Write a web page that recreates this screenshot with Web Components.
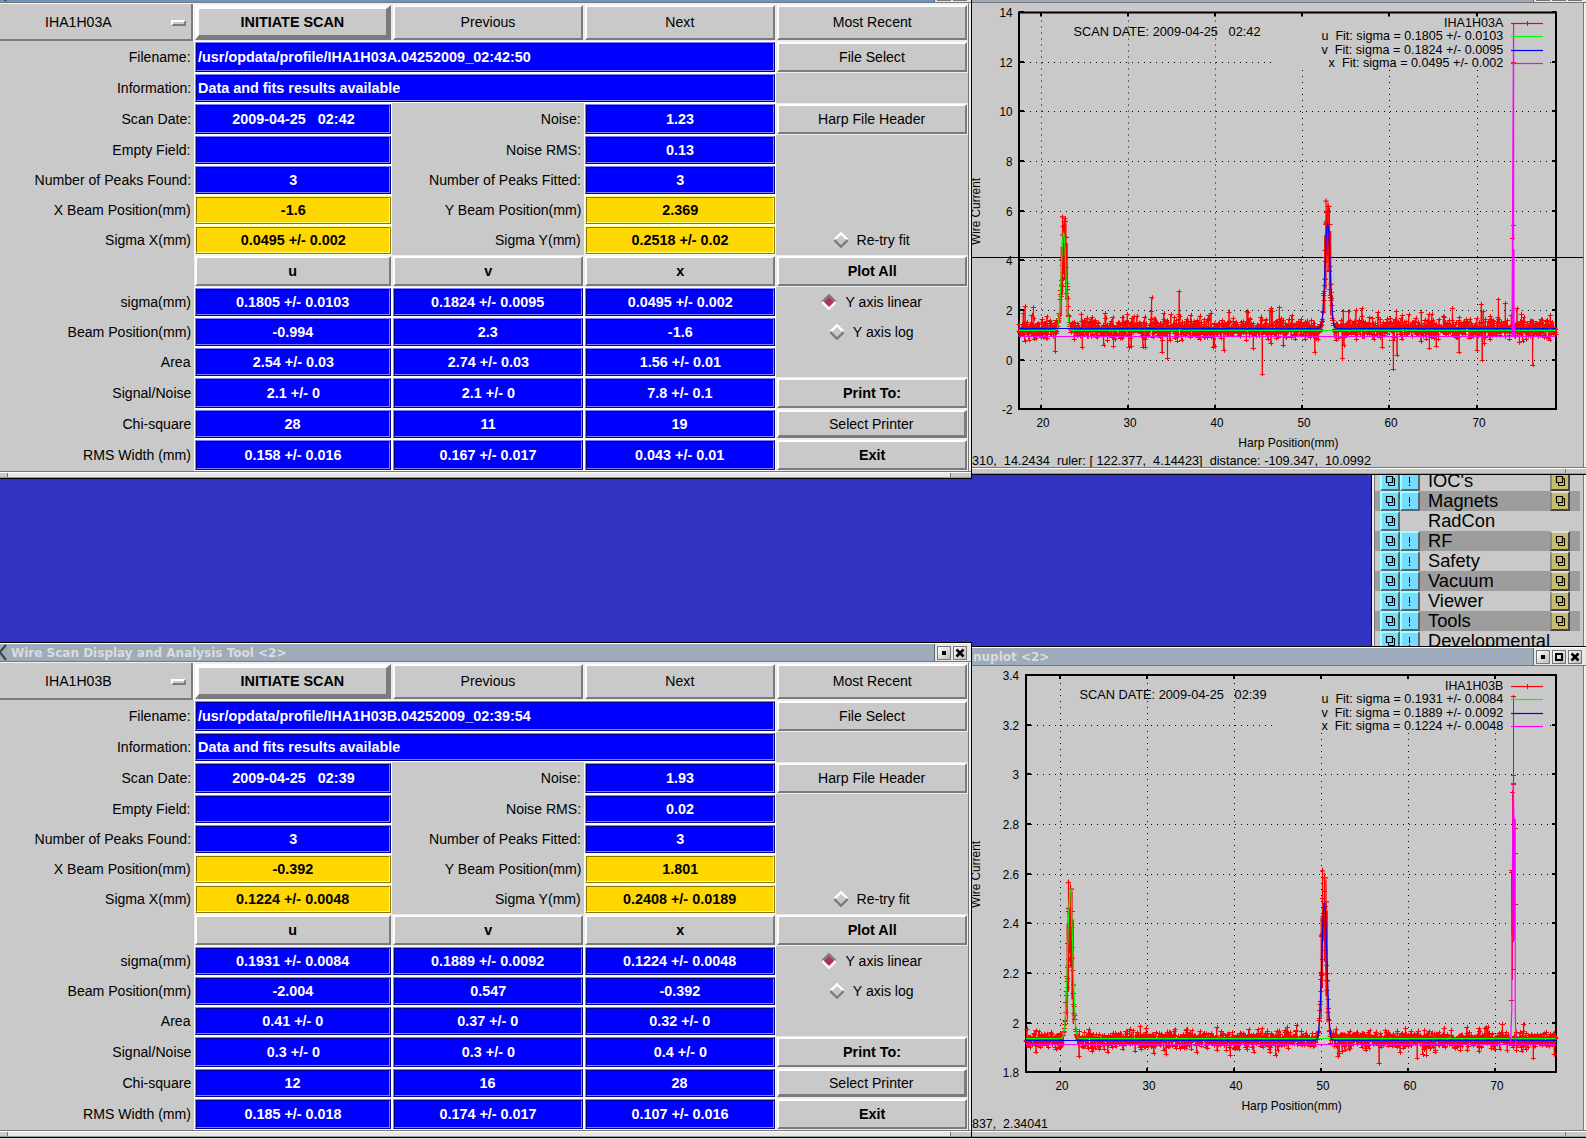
<!DOCTYPE html>
<html lang="en">
<head>
<meta charset="utf-8">
<title>Wire Scan Display and Analysis Tool</title>
<style>
  html, body { margin: 0; height: 100%; overflow: hidden; }
  body {
    position: relative;
    width: 1586px;
    height: 1139px;
    background: #3333c3;
    font-family: 'Liberation Sans', Arial, sans-serif;
    color: #000;
  }
  .floor { position: absolute; left: 0; right: 0; top: 1138px; height: 1px; background: #dcdcdc; }
  nav-menu { position: absolute; left: 1371px; top: 471px; }
  wm-window { position: absolute; }
  #plotA { left: 971px; top: -17px; }
  #plotB { left: 971px; top: 646px; }
  #scanA { left: 0; top: -17px; }
  #scanB { left: 0; top: 642px; }
</style>
</head>
<body>
<div class="floor"></div>
<nav-menu></nav-menu>
<wm-window id="plotA" kind="plot" label="nuplot"><harp-plot data-set="A"></harp-plot></wm-window>
<wm-window id="plotB" kind="plot" label="nuplot &lt;2&gt;"><harp-plot data-set="B"></harp-plot></wm-window>
<wm-window id="scanA" kind="scan" focused label="Wire Scan Display and Analysis Tool"><scan-panel data-set="A"></scan-panel></wm-window>
<wm-window id="scanB" kind="scan" label="Wire Scan Display and Analysis Tool &lt;2&gt;"><scan-panel data-set="B"></scan-panel></wm-window>

<script>
/* --------------------------------------------------------------------------
   <wm-window> title bar, frame and resize strip
   -------------------------------------------------------------------------- */
const windowTemplate = document.createElement('template');
windowTemplate.innerHTML = `
<style>
  :host {
    display: flex;
    flex-direction: column;
    box-sizing: border-box;
    width: 972px;
    background: #c9c9c9;
    border-top: 1px solid #000;
    border-right: 1px solid #000;
    border-bottom: 1px solid #000;
  }
  :host([kind="plot"]) { width: 616px; border-left: 1px solid #000; }

  .bar {
    display: flex;
    height: 17px;
    border-top: 1px solid #fff;
    border-bottom: 1px solid #777;
    background: #9dabbb;
  }
  :host([focused]) .bar { background: #6a96c4; }

  .mark { width: 11px; height: 17px; flex: none; }
  :host([kind="plot"]) .mark { width: 1px; }
  .mark svg { display: block; }
  :host([kind="plot"]) .mark svg { display: none; }

  .title {
    flex: 1;
    font: bold 12px/17px 'DejaVu Sans', sans-serif;
    color: #dcdcdc;
    white-space: pre;
    overflow: hidden;
    padding-top: 1px;
    height: 16px;
  }

  .buttons {
    display: flex;
    gap: 2px;
    padding: 2px 4px 0 2px;
    height: 15px;
    background: #e8e8e8;
    border-left: 1px solid #666;
  }
  .buttons i {
    box-sizing: border-box;
    width: 14px;
    height: 14px;
    border: 1px solid #777;
    background: linear-gradient(135deg, #fff, #bbb);
  }
  .buttons svg { display: block; width: 12px; height: 12px; }

  .body { display: flex; border-right: 1px solid #777; margin-right: 2px; box-shadow: 2px 0 0 #f0f0f0; }
  :host([kind="scan"]) .body { border-top: 1px solid #f4f4f4; }

  .strip {
    display: flex;
    height: 5px;
    border-top: 1px solid #777;
    box-shadow: inset 0 1px 0 #fff;
    background: #e8e8e8;
    border-bottom: 1px solid #999;
  }
  :host([kind="plot"]) .strip { background: #c9c9c9; }
  .strip b { box-sizing: border-box; width: 8px; background: #c9c9c9; border-right: 1px solid #777; margin-top: 1px; }
  .strip u { flex: 1; }
  .strip s { box-sizing: border-box; width: 21px; background: #c9c9c9; border-left: 1px solid #777; margin-top: 1px; }
  :host([kind="plot"]) .strip b { display: none; }
</style>
<div class="bar">
  <div class="mark"><svg width="11" height="17"><path d="M-1 9L6 1M-1 7L6 16" stroke="#444" stroke-width="2.2" fill="none"/></svg></div>
  <div class="title"><span></span></div>
  <div class="buttons">
    <i><svg viewBox="0 0 12 12"><rect x="4" y="4" width="4" height="4"/></svg></i>
    <i class="max"><svg viewBox="0 0 12 12"><rect x="3" y="3" width="6" height="6" fill="none" stroke="#000" stroke-width="2"/></svg></i>
    <i><svg viewBox="0 0 12 12"><path d="M2.5 2.5L9.5 9.5M9.5 2.5L2.5 9.5" stroke="#000" stroke-width="2.6"/></svg></i>
  </div>
</div>
<div class="body"><slot></slot></div>
<div class="strip"><b></b><u></u><s></s></div>
`;

class WmWindow extends HTMLElement {
  constructor() {
    super();
    this.attachShadow({ mode: 'open' });
    this.shadowRoot.appendChild(windowTemplate.content.cloneNode(true));
  }

  connectedCallback() {
    // windows pushed above the top of the screen keep only the edge of their bar
    this.shadowRoot.querySelector('.title span').textContent =
      this.offsetTop < 0 ? '' : this.getAttribute('label');
    if (this.getAttribute('kind') === 'scan') {
      this.shadowRoot.querySelector('.max').remove();
    }
  }
}
customElements.define('wm-window', WmWindow);

/* --------------------------------------------------------------------------
   <scan-cell> one cell of the scan panel: label, field, push or option
   -------------------------------------------------------------------------- */
const cellTemplate = document.createElement('template');
cellTemplate.innerHTML = `
<style>
  :host {
    display: flex;
    align-items: center;
    justify-content: center;
    box-sizing: border-box;
    min-width: 0;
    font-size: 15.4px;
    line-height: 18px;
    white-space: pre;
  }
  span { display: inline-block; transform: scaleX(.915); }

  :host([type="label"]) { justify-content: flex-end; padding-right: 3px; }
  :host([type="label"]) span { transform-origin: 100% 50%; transform: scaleX(.915); }

  :host([type="field"]) { border: 1px solid #fff; color: #fff; font-weight: bold; }
  :host([type="field"]) .box { border-color: #8080ff #000090 #000090 #8080ff; background: #00f; }
  :host([type="field"]) .in { border-color: #000090 #8080ff #8080ff #000090; }
  :host([tone="gold"]) { color: #000; border-color: #fffff0; }
  :host([tone="gold"]) .box { border-color: #ffff7c #8c7600 #8c7600 #ffff7c; background: #ffd700; }
  :host([tone="gold"]) .in { border-color: #8c7600 #ffff7c #ffff7c #8c7600; }
  :host([type="field"]) span, :host([bold]) span { transform: scaleX(.935); }
  :host([bold]) { font-weight: bold; }
  :host([left]) .in { justify-content: flex-start; padding-left: 1px; }
  :host([left]) span { transform-origin: 0 50%; }

  .box, .in {
    display: flex;
    flex: 1;
    align-self: stretch;
    align-items: center;
    justify-content: center;
    border: 0 solid;
  }
  :host([type="field"]) .box, :host([type="field"]) .in { border-width: 1px; }

  :host([type="push"]) { border: 1px solid #ececec; }
  :host([type="push"]) .box { border: 2px solid; border-color: #fff #7b7b7b #7b7b7b #fff; }
  :host([type="push"][depth="3"]) .box { border-width: 2px 3px 3px 2px; }
  :host([type="push"][depth="5"]) .box { border-width: 4px 5px 5px 4px; }
  :host([head]) .in { padding-bottom: 2px; }
  :host([head][depth]) .in { padding-bottom: 1px; }

  :host([type="option"]) { border-right: 1px solid #fff; }
  :host([type="option"]) .box { border: solid #7b7b7b; border-width: 0 2px 2px 0; }
  :host([type="option"]) .in { justify-content: flex-end; padding-bottom: 0; }
  .knob {
    box-sizing: border-box;
    width: 15px;
    height: 6px;
    margin: 2px 5px 0 56px;
    border: 2px solid;
    border-color: #fff #7b7b7b #7b7b7b #fff;
    background: #c9c9c9;
  }
  .knob, .gem { display: none; }
  :host([type="option"]) .knob { display: block; }
  :host([type="radio"]) .in { padding-left: 2px; }
  :host([type="radio"]) .gem { display: block; margin-right: 5px; }
</style>
<div class="box"><div class="in">
  <svg class="gem" width="16" height="16" viewBox="0 0 16 16">
    <path class="hi" d="M1.5 8L8 1.5L14.5 8" fill="none" stroke="#fff" stroke-width="2.6"/>
    <path class="lo" d="M1.5 8L8 14.5L14.5 8" fill="none" stroke="#7b7b7b" stroke-width="2.6"/>
    <path class="dot" d="M8 3L13 8L8 13L3 8Z" fill="#c9c9c9"/>
  </svg><span><slot></slot></span><div class="knob"></div>
</div></div>
`;

class ScanCell extends HTMLElement {
  constructor() {
    super();
    this.attachShadow({ mode: 'open' });
    this.shadowRoot.appendChild(cellTemplate.content.cloneNode(true));
  }

  connectedCallback() {
    const root = this.shadowRoot;
    if (this.getAttribute('type') === 'label') {
      root.querySelector('.in').style.justifyContent = 'flex-end';
    }
    if (this.hasAttribute('checked')) {
      root.querySelector('.hi').setAttribute('stroke', '#7b7b7b');
      root.querySelector('.lo').setAttribute('stroke', '#fff');
      root.querySelector('.dot').setAttribute('fill', '#b03060');
    }
  }
}
customElements.define('scan-cell', ScanCell);

/* --------------------------------------------------------------------------
   <scan-panel>
   -------------------------------------------------------------------------- */
const SCANS = {
  A: {
    name: 'IHA1H03A',
    file: '/usr/opdata/profile/IHA1H03A.04252009_02:42:50',
    date: '2009-04-25   02:42', noise: '1.23', rms: '0.13',
    xpos: '-1.6', ypos: '2.369', sx: '0.0495 +/- 0.002', sy: '0.2518 +/- 0.02',
    rows: [
      ['0.1805 +/- 0.0103', '0.1824 +/- 0.0095', '0.0495 +/- 0.002'],
      ['-0.994', '2.3', '-1.6'],
      ['2.54 +/- 0.03', '2.74 +/- 0.03', '1.56 +/- 0.01'],
      ['2.1 +/- 0', '2.1 +/- 0', '7.8 +/- 0.1'],
      ['28', '11', '19'],
      ['0.158 +/- 0.016', '0.167 +/- 0.017', '0.043 +/- 0.01'],
    ],
  },
  B: {
    name: 'IHA1H03B',
    file: '/usr/opdata/profile/IHA1H03B.04252009_02:39:54',
    date: '2009-04-25   02:39', noise: '1.93', rms: '0.02',
    xpos: '-0.392', ypos: '1.801', sx: '0.1224 +/- 0.0048', sy: '0.2408 +/- 0.0189',
    rows: [
      ['0.1931 +/- 0.0084', '0.1889 +/- 0.0092', '0.1224 +/- 0.0048'],
      ['-2.004', '0.547', '-0.392'],
      ['0.41 +/- 0', '0.37 +/- 0', '0.32 +/- 0'],
      ['0.3 +/- 0', '0.3 +/- 0', '0.4 +/- 0'],
      ['12', '16', '28'],
      ['0.185 +/- 0.018', '0.174 +/- 0.017', '0.107 +/- 0.016'],
    ],
  },
};

class ScanPanel extends HTMLElement {
  constructor() {
    super();
    this.attachShadow({ mode: 'open' });
  }

  connectedCallback() {
    const d = SCANS[this.dataset.set];
    const label = (t) => `<scan-cell type="label">${t}</scan-cell>`;
    const field = (t, more = '') => `<scan-cell type="field" ${more}>${t}</scan-cell>`;
    const gold = (t) => field(t, 'tone="gold"');
    const push = (t, more = '') => `<scan-cell type="push" ${more}>${t}</scan-cell>`;
    const radio = (t, more = '') => `<scan-cell type="radio" ${more}>${t}</scan-cell>`;
    const names = ['sigma(mm)', 'Beam Position(mm)', 'Area', 'Signal/Noise', 'Chi-square', 'RMS Width (mm)'];
    const side = [
      radio('Y axis linear', 'checked'), radio('Y axis log'), '<i></i>',
      push('Print To:', 'bold'), push('Select Printer', 'depth="3"'), push('Exit', 'bold'),
    ];

    this.shadowRoot.innerHTML = `
<style>
  :host {
    display: grid;
    grid-template-columns: 194px 198px 192px 192px 192px;
    grid-template-rows: 37px 32px 30px 32px 30px 30px 30px 30px 32px 30px 30px 30px 32px 30px 32px;
    background: #c9c9c9;
  }
  .wide { grid-column: span 3; }
</style>
<scan-cell type="option">${d.name}</scan-cell>
${push('INITIATE SCAN', 'head bold depth="5"')}${push('Previous', 'head')}${push('Next', 'head')}${push('Most Recent', 'head')}
${label('Filename:')}${field(d.file, 'left class="wide"')}${push('File Select')}
${label('Information:')}${field('Data and fits results available', 'left class="wide"')}<i></i>
${label('Scan Date:')}${field(d.date)}${label('Noise:')}${field(d.noise)}${push('Harp File Header')}
${label('Empty Field:')}${field('')}${label('Noise RMS:')}${field(d.rms)}<i></i>
${label('Number of Peaks Found:')}${field('3')}${label('Number of Peaks Fitted:')}${field('3')}<i></i>
${label('X Beam Position(mm)')}${gold(d.xpos)}${label('Y Beam Position(mm)')}${gold(d.ypos)}<i></i>
${label('Sigma X(mm)')}${gold(d.sx)}${label('Sigma Y(mm)')}${gold(d.sy)}${radio('Re-try fit')}
<i></i>${push('u', 'bold')}${push('v', 'bold')}${push('x', 'bold')}${push('Plot All', 'bold')}
${d.rows.map((r, i) => label(names[i]) + r.map((v) => field(v)).join('') + side[i]).join('')}`;
  }
}
customElements.define('scan-panel', ScanPanel);

/* --------------------------------------------------------------------------
   <nav-menu> list of control screens
   -------------------------------------------------------------------------- */
class NavMenu extends HTMLElement {
  constructor() {
    super();
    this.attachShadow({ mode: 'open' });
    const pages = '<svg viewBox="0 0 16 16"><path d="M10.5 5.5H12.5V12.5H6.5V10" fill="none" stroke="#000"/><path d="M4.5 3.5H10.5V9.5H4.5Z" fill="none" stroke="#000" stroke-width="1.2"/></svg>';
    const bang = '<svg viewBox="0 0 16 16"><path d="M7.5 4V10M7.5 11.5V13" stroke="#000"/></svg>';
    const items = [
      ["IOC's", 1, 1], ['Magnets', 1, 1], ['RadCon', 0, 0], ['RF', 1, 1], ['Safety', 1, 1],
      ['Vacuum', 1, 1], ['Viewer', 1, 1], ['Tools', 1, 1], ['Developmental', 1, 0],
    ];
    this.shadowRoot.innerHTML = `
<style>
  :host {
    display: flex;
    flex-direction: column;
    box-sizing: border-box;
    width: 215px;
    border-left: 1px solid #000;
    background: #c9c9c9;
    box-shadow: inset 2px 0 0 #f0f0f0, inset 3px 0 0 #777, inset -2px 0 0 #f0f0f0, inset -3px 0 0 #777;
    padding: 0 6px 0 3px;
  }
  .row {
    display: grid;
    grid-template-columns: 20px 20px 130px 20px;
    height: 20px;
    padding-left: 5px;
  }
  .row:nth-of-type(even) { background: #9d9d9d; }
  .row b {
    box-sizing: border-box;
    height: 20px;
    border: 2px solid;
    border-color: #a0ffff #56686c #56686c #a0ffff;
    background: #74dcff;
  }
  .row b.go { border-color: #dedede #444 #444 #888; background: #c8bc6c; }
  .row svg { display: block; width: 16px; height: 16px; }
  .row span { padding-left: 8px; font-size: 18.3px; line-height: 19px; white-space: nowrap; }
</style>
${items.map(([t, b, g]) => `<div class="row"><b>${pages}</b>${b ? `<b>${bang}</b>` : '<i></i>'}<span>${t}</span>${g ? `<b class="go">${pages}</b>` : ''}</div>`).join('')}`;
  }
}
customElements.define('nav-menu', NavMenu);

/* --------------------------------------------------------------------------
   <harp-plot> gnuplot style chart, drawn in screen coordinates
   -------------------------------------------------------------------------- */
const PLOTS = {
  A: {
    oy: 3, left: 1019, top: 12.5, bottom: 409,
    yt: [['14', 12], ['12', 62], ['10', 111], ['8', 161], ['6', 211], ['4', 260], ['2', 310], ['0', 360], ['-2', 409]],
    xt: [1041, 1128, 1215, 1302, 1389, 1477], tickRight: 1012.5,
    title: ['SCAN DATE: 2009-04-25   02:42', 1073.5, 187, 36],
    legend: [
      ['IHA1H03A', 1444, 27, 23.5], ['u  Fit: sigma = 0.1805 +/- 0.0103', 1321.4, 40, 36.5],
      ['v  Fit: sigma = 0.1824 +/- 0.0095', 1321.4, 54, 50.5], ['x  Fit: sigma = 0.0495 +/- 0.002', 1328.6, 67, 63.5],
    ],
    xlab: [1238.3, 447], xnum: 427,
    ylab: [980, 245, 67],
    status: ['310,  14.2434  ruler: [ 122.377,  4.14423]  distance: -109.347,  10.0992', 399, 465],
    clear: 70, seed: 7, base: 328.5, sd: 3.2, up: 2.2,
    peaks: [[1064, 114, 2.5], [1327.5, 130, 2.5]],
    fits: [[1063.6, 98, 2.3, 330.5, '#00ff00'], [1327.6, 105, 2.5, 328.5, '#0000ff']],
    xbase: 336.5, xfit: 'M1512 336.5L1513 126V336.5M1513 126L1513.6 23V240M1514 249V320L1514.6 336.5',
    xred: 'M1513.5 249V285M1511 62.5H1516M1511 225.5H1516M1510 238.5H1515',
    far: [[173, 232], [471, 202], [541, 184], [770, 240], [794, 232], [228, 364], [296, 352], [511, 383], [498, 365], [751, 431],
      [883, 367], [953, 385], [1082, 416], [1091, 374], [1248, 365], [1306, 389], [1347, 208], [1364, 219], [1433, 404],
      [1042, 246], [1152, 246], [654, 361], [728, 355], [1293, 361], [350, 345], [1190, 347], [147, 249], [354, 249],
      [1089, 243], [955, 243], [410, 252], [434, 257], [615, 255], [825, 256], [1208, 258], [1394, 235], [804, 346],
      [455, 352], [420, 349], [627, 352], [1054, 351], [1173, 353], [1400, 337], [1478, 255]],
    farY: 230,
  },
  B: {
    oy: 666, left: 1026, top: 675, bottom: 1072,
    yt: [['3.4', 675], ['3.2', 725], ['3', 774], ['2.8', 824], ['2.6', 874], ['2.4', 923], ['2.2', 973], ['2', 1023], ['1.8', 1072]],
    xt: [1060, 1147, 1234, 1321, 1408, 1495], tickRight: 1019,
    title: ['SCAN DATE: 2009-04-25   02:39', 1079.5, 187, 699],
    legend: [
      ['IHA1H03B', 1445, 690, 686.5], ['u  Fit: sigma = 0.1931 +/- 0.0084', 1321.4, 703, 699.5],
      ['v  Fit: sigma = 0.1889 +/- 0.0092', 1321.4, 717, 713.5], ['x  Fit: sigma = 0.1224 +/- 0.0048', 1321.4, 730, 726.5],
    ],
    xlab: [1241.4, 1110], xnum: 1090,
    ylab: [980, 908, 67],
    status: ['837,  2.34041', 76, 1128],
    clear: 733, seed: 21, base: 1039.5, sd: 2.8, up: 1,
    peaks: [[1070, 160, 2.6], [1324, 172, 2.4]],
    fits: [[1070.2, 150, 2.5, 1038.5, '#00ff00'], [1324.4, 138, 2.5, 1040.5, '#0000ff']],
    xbase: 1044.5, xfit: 'M1510.5 1044.5L1511.8 1010V940L1513.2 783L1514 819V940M1515.2 1010V819M1514 819H1515M1515.2 1010L1516 1044.5',
    xred: 'M1513.5 695V942M1512.5 790V980M1511.5 870V935M1511 696.5H1516M1511 775.5H1516M1511 783.5H1516M1511 784.5H1516M1510 792.5H1515M1513 828.5H1518M1513 853.5H1518M1509 870.5H1514M1509 872.5H1514M1514 904.5H1518M1509 1000.5H1514M1511 969.5H1516',
    far: [[443, 409], [837, 404], [670, 495], [784, 495], [942, 499], [1046, 520], [1142, 503], [1165, 495], [1357, 401],
      [1411, 401], [1435, 503], [508, 492], [1488, 493], [560, 416], [1112, 414], [321, 484], [1210, 413], [360, 485],
      [585, 487], [729, 485], [1099, 487], [1187, 485], [1298, 484], [178, 421], [312, 417], [750, 415], [1317, 412]],
    farY: 890,
  },
};

// small deterministic generator so the trace is the same on every load
function makeRandom(seed) {
  let s = seed;
  return () => {
    s = (s * 16807) % 2147483647;
    return s / 2147483647;
  };
}

class HarpPlot extends HTMLElement {
  constructor() {
    super();
    this.attachShadow({ mode: 'open' });
  }

  connectedCallback() {
    const p = PLOTS[this.dataset.set];
    this.shadowRoot.innerHTML = `
<style>
  :host { display: block; width: 611px; height: 464px; }
  svg { display: block; overflow: visible; }
  text { font-family: 'Liberation Sans', Arial, sans-serif; font-size: 12.6px; white-space: pre; }
</style>
<svg width="611" height="464" viewBox="972 ${p.oy} 611 464">
  ${this._grid(p)}
  ${this._labels(p)}
  ${this._trace(p)}
  ${this._fits(p)}
  ${this._legendKeys(p)}
</svg>`;
  }

  _grid(p) {
    const right = 1556;
    let dots = '';
    let ticks = '';
    p.yt.forEach(([, y], i) => {
      if (i > 0 && i < p.yt.length - 1) {
        dots += i === 1 ? `M${p.left + 5} ${y + .5}H1273M1550 ${y + .5}H1553` : `M${p.left + 5} ${y + .5}H${right}`;
      }
      ticks += `M${p.left} ${y}h5M${right} ${y}h-4`;
    });
    p.xt.forEach((x, i) => {
      dots += `M${x + .5} ${i < 3 ? p.top + 8 : p.clear}V${p.bottom}`;
      ticks += `M${x} ${p.bottom}v-4M${x} ${p.top}v4`;
    });
    const ruler = this.dataset.set === 'A' ? '<path d="M972 257.5H1583" stroke="#000"/>' : '';
    return `<path d="${dots}" stroke="#000" stroke-dasharray="1 5" fill="none"/>
  <path d="${ticks}" stroke="#000" stroke-width="2" fill="none"/>
  <rect x="${p.left}" y="${p.top}" width="${right - p.left}" height="${p.bottom - p.top}" fill="none" stroke="#000" stroke-width="2"/>${ruler}`;
  }

  _labels(p) {
    const fit = (t, x, y, w) => `<text x="${x}" y="${y}" textLength="${w}" lengthAdjust="spacingAndGlyphs">${t}</text>`;
    const [yx, yy, yw] = p.ylab;
    // axis numbers are narrower than the font's own digits
    const num = (t, x, y, anchor) => `<text transform="translate(${x} ${y}) scale(.93 1)" text-anchor="${anchor}">${t}</text>`;
    return p.yt.map(([t, y]) => num(t, p.tickRight, y + 4.5, 'end')).join('')
      + p.xt.map((x, i) => num(20 + i * 10, x + 2, p.xnum, 'middle')).join('')
      + fit(p.title[0], p.title[1], p.title[3], p.title[2])
      + p.legend.map(([t, x, y]) => fit(t, x, y, 1503.3 - x)).join('')
      + fit('Harp Position(mm)', p.xlab[0], p.xlab[1], 100.3)
      + fit(p.status[0], 972, p.status[2], p.status[1])
      + `<text transform="translate(${yx} ${yy}) rotate(-90)" textLength="${yw}" lengthAdjust="spacingAndGlyphs">Wire Current</text>`;
  }

  _trace(p) {
    const rnd = makeRandom(p.seed);
    const gauss = () => rnd() + rnd() + rnd() + rnd() - 2;
    const far = p.far.map(([x, y]) => [965 + x / 2.525, p.farY + y / 3]);
    let line = '';
    let marks = '';
    const add = (x, y) => {
      line += `${line ? 'L' : 'M'}${x.toFixed(1)} ${y.toFixed(1)}`;
      marks += `M${(x - 2.5).toFixed(1)} ${Math.round(y) + .5}h5M${Math.round(x) + .5} ${(y - 2).toFixed(1)}v4.5`;
    };
    for (let x = p.left; x < 1556; x += .3) {
      let y = p.base + gauss() * p.sd * 2.5;
      const r = rnd();
      if (r < .04) y -= rnd() * p.sd * 3.6 * p.up / 1.4;
      else if (r < .08) y += rnd() * p.sd * 4.2;
      p.peaks.forEach(([cx, h, s]) => {
        const g = Math.exp(-((x - cx) ** 2) / (2 * s * s));
        if (g > .03) y = p.base - h * g * (.5 + rnd() * .5) + gauss() * 3;
      });
      if (far.length) {
        const i = far.findIndex((f) => Math.abs(f[0] - x) < .16);
        if (i >= 0) {
          y = far[i][1];
          far.splice(i, 1);
        }
      }
      add(x, y);
    }
    // raw samples reach well outside the fitted curve near each peak
    const spikes = p.peaks.map(([cx, h]) => {
      const y = (k) => (p.base - h * k).toFixed(1);
      return `M${cx - 1.5} ${y(1)}V${y(.3)}M${cx + .5} ${y(.97)}V${y(.45)}M${cx + 2} ${y(.93)}V${y(.25)}M${cx - 2.8} ${y(.72)}V${y(.12)}M${cx + 3.2} ${y(.75)}V${y(.1)}
        M${cx - 4} ${y(.98)}h5M${cx - 1} ${y(.94)}h5M${cx - 4} ${y(.82)}h5M${cx} ${y(.8)}h5M${cx - 5} ${y(.6)}h5M${cx - 5} ${y(.38)}h5M${cx + 1} ${y(.34)}h5`;
    }).join('');
    return `<path d="${line}" stroke="#f00" fill="none"/><path d="${marks}" stroke="#f00" fill="none"/>
  <path d="${spikes}" stroke="#f00" stroke-width="1.2" fill="none"/>`;
  }

  _fits(p) {
    const curves = p.fits.map(([cx, h, s, base, color]) => {
      let d = '';
      for (let x = p.left; x <= 1556; x += .5) {
        const y = base - h * Math.exp(-((x - cx) ** 2) / (2 * s * s));
        d += `${d ? 'L' : 'M'}${x} ${y.toFixed(1)}`;
      }
      return `<path d="${d}" stroke="${color}" stroke-width="1.1" fill="none"/>`;
    });
    return curves.join('') + `<path d="${p.xred}" stroke="#f00" fill="none"/>
  <path d="M${p.left} ${p.xbase}H1556" stroke="#f0f"/><path d="${p.xfit}" stroke="#f0f" stroke-width="1.2" fill="none"/>`;
  }

  _legendKeys(p) {
    const colors = ['#f00', '#0f0', '#00f', '#f0f'];
    return p.legend.map((l, i) => `<path d="M1511 ${l[3]}h32" stroke="${colors[i]}" stroke-width="1.2"/>`).join('')
      + `<path d="M1527.5 ${p.legend[0][3] - 2.5}v5" stroke="#f00"/>`;
  }
}
customElements.define('harp-plot', HarpPlot);
</script>
</body>
</html>
